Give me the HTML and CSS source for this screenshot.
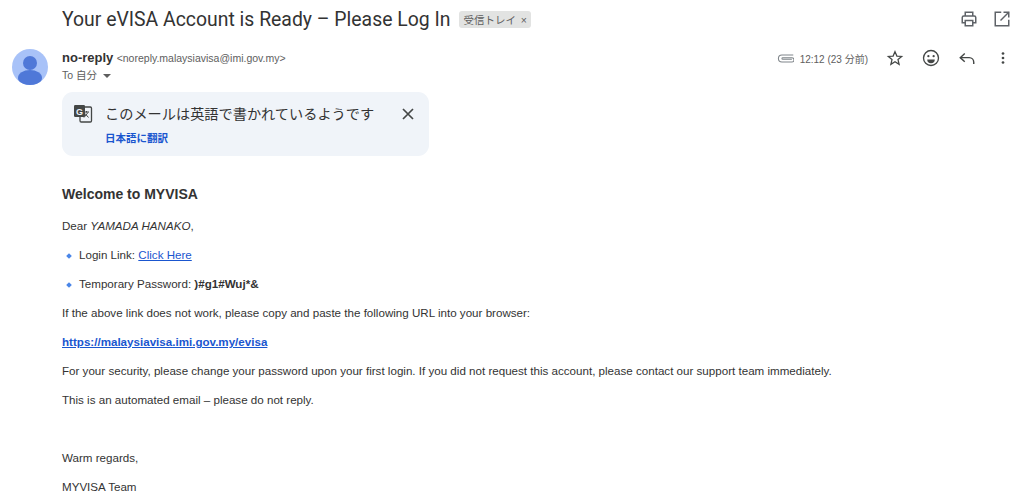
FILE: index.html
```html
<!DOCTYPE html>
<html lang="ja">
<head>
  <meta charset="UTF-8">
  <title>Your eVISA Account is Ready</title>
  <link rel="stylesheet" href="styles.css">
</head>
<body>
  <div class="asunto">
    <h1>Your eVISA Account is Ready – Please Log In</h1>
    <span class="etiqueta">受信トレイ <b>×</b></span>
    <div class="asunto-iconos">
      <svg width="18" height="18" viewBox="0 0 24 24" fill="none" stroke="#5f6368" stroke-width="2"><path d="M7 8V3h10v5"/><path d="M7 17H3v-7a2 2 0 0 1 2-2h14a2 2 0 0 1 2 2v7h-4"/><path d="M7 14h10v7H7z"/></svg>
      <svg width="18" height="18" viewBox="0 0 24 24" fill="none" stroke="#5f6368" stroke-width="2"><path d="M11 3H3v18h18v-8"/><path d="M14 3h7v7"/><path d="M21 3L10 14"/></svg>
    </div>
  </div>

  <div class="cabecera">
    <svg class="avatar" width="36" height="36" viewBox="0 0 36 36"><defs><clipPath id="circulo"><circle cx="18" cy="18" r="18"/></clipPath></defs><circle cx="18" cy="18" r="18" fill="#a8c2f8"/><g clip-path="url(#circulo)" fill="#4f78d8"><circle cx="18" cy="14" r="7"/><ellipse cx="18" cy="29" rx="12" ry="8"/></g></svg>
    <div class="remitente">
      <div><strong>no-reply</strong> <span class="correo">&lt;noreply.malaysiavisa@imi.gov.my&gt;</span></div>
      <div class="para">To 自分 <i class="flecha"></i></div>
    </div>
    <div class="acciones">
      <svg class="clip" width="17" height="17" viewBox="0 0 24 24" fill="none" stroke="#80868b" stroke-width="1.500"><path d="M23 7H7a5 5 0 0 0 0 10h14a3 3 0 0 0 0-6H8a1 1 0 0 0 0 2h13"/></svg>
      <span class="hora">12:12 (23 分前)</span>
      <svg class="estrella" width="18" height="18" viewBox="0 0 24 24" fill="none" stroke="#444746" stroke-width="1.700"><path d="M12 3.500l2.500 5.900 6.400.5-4.900 4.200 1.500 6.300-5.500-3.300-5.500 3.300 1.500-6.300-4.900-4.200 6.400-.5z"/></svg>
      <svg width="18" height="18" viewBox="0 0 24 24" fill="none" stroke="#444746" stroke-width="1.800"><circle cx="12" cy="12" r="10"/><circle cx="8.500" cy="9.500" r="1.500" fill="#444746" stroke="none"/><circle cx="15.500" cy="9.500" r="1.500" fill="#444746" stroke="none"/><path d="M7 14h10a5 5 0 0 1-10 0z" fill="#444746" stroke="none"/></svg>
      <svg width="18" height="18" viewBox="0 0 24 24" fill="none" stroke="#444746" stroke-width="1.900"><path d="M9 6l-6 5.500 6 5.500"/><path d="M3 11.500h12a6 6 0 0 1 6 6v2.500"/></svg>
      <svg width="18" height="18" viewBox="0 0 24 24" fill="#444746"><circle cx="12" cy="6" r="1.800"/><circle cx="12" cy="12" r="1.800"/><circle cx="12" cy="18" r="1.800"/></svg>
    </div>
  </div>

  <div class="traduccion">
    <svg class="traduccion-icono" width="20" height="20" viewBox="0 0 20 20"><rect x="7" y="4" width="11.500" height="15" rx="1.200" fill="#f0f4f9" stroke="#444746" stroke-width="1.300"/><rect x="1" y="2" width="11" height="12" rx="1.200" fill="#444746"/><text class="letra-g" x="3" y="11.500">G</text><path d="M11 9h5M13.500 8v1.500M15 9.500l-4 5M12 10.500l3.500 4" fill="none" stroke="#444746" stroke-width="1"/></svg>
    <div class="traduccion-texto">
      <p class="aviso">このメールは英語で書かれているようです</p>
      <a class="traducir">日本語に翻訳</a>
    </div>
    <svg class="cerrar" width="14" height="14" viewBox="0 0 14 14" stroke="#444746" stroke-width="1.700"><path d="M2 2l10 10M12 2L2 12"/></svg>
  </div>

  <div class="mensaje">
    <h2>Welcome to MYVISA</h2>
    <p>Dear <em>YAMADA HANAKO</em>,</p>
    <ul>
      <li>Login Link: <a href="#">Click Here</a></li>
      <li>Temporary Password: <strong>)#g1#Wuj*&amp;</strong></li>
    </ul>
    <p>If the above link does not work, please copy and paste the following URL into your browser:</p>
    <p><a href="#"><strong>https://malaysiavisa.imi.gov.my/evisa</strong></a></p>
    <p>For your security, please change your password upon your first login. If you did not request this account, please contact our support team immediately.</p>
    <p>This is an automated email – please do not reply.</p>
    <p class="despedida">Warm regards,</p>
    <p>MYVISA Team</p>
  </div>
</body>
</html>
```

FILE: styles.css
```css
* {
  box-sizing: border-box;
}
body {
  margin: 0;
  height: 504px;
  overflow: hidden;
  background: white;
  color: #333;
  font-family: "Liberation Sans", "Noto Sans CJK JP", sans-serif;
  font-size: 12px;
}
.asunto {
  display: flex;
  align-items: center;
  height: 38px;
  padding: 0 13px 0 62px;
}
h1 {
  margin: 0;
  font-family: Roboto, "Noto Sans CJK JP", sans-serif;
  font-size: 19.400px;
  font-weight: 400;
  color: #333;
}
.etiqueta {
  margin-left: 9px;
  padding: 1px 4px;
  background: #e2e3e2;
  border-radius: 3px;
  font-size: 10.500px;
  color: #5e5e5e;
}
.etiqueta b {
  margin-left: 2px;
  font-weight: 400;
}
.asunto-iconos {
  display: flex;
  gap: 15px;
  margin-left: auto;
}
.cabecera {
  display: flex;
  align-items: flex-start;
  height: 54px;
  padding: 11px 12px 0 12px;
}
.avatar {
  flex: none;
}
.remitente {
  margin-left: 14px;
  padding-top: 1px;
}
.remitente strong {
  font-size: 13px;
  color: #333;
}
.correo {
  font-size: 10.500px;
  color: #5e5e5e;
}
.para {
  margin-top: 2px;
  font-size: 10.500px;
  color: #5e5e5e;
}
.flecha {
  display: inline-block;
  margin-left: 3px;
  vertical-align: middle;
  border-top: 4px solid #5e5e5e;
  border-left: 4px solid transparent;
  border-right: 4px solid transparent;
}
.acciones {
  display: flex;
  align-items: center;
  gap: 18px;
  margin-left: auto;
}
.clip {
  margin-right: -12px;
}
.hora {
  font-size: 10px;
  color: #5e5e5e;
}
.traduccion {
  display: flex;
  align-items: flex-start;
  width: 367px;
  height: 64px;
  margin-left: 62px;
  padding: 11px 14px 0 11px;
  background: #f0f4f9;
  border-radius: 11px;
}
.traduccion-icono {
  flex: none;
}
.letra-g {
  font-size: 9px;
  font-weight: 700;
  fill: #f0f4f9;
}
.traduccion-texto {
  margin-left: 12px;
}
.aviso {
  margin: 0;
  font-size: 14.200px;
  color: #333;
}
.traducir {
  display: block;
  margin-top: 7px;
  font-size: 10.500px;
  font-weight: 700;
  color: #1a56cf;
}
.cerrar {
  margin: 4px 0 0 auto;
}
.mensaje {
  padding: 30px 0 0 62px;
  font-size: 11.600px;
  line-height: 14px;
}
h2 {
  margin: 0 0 17px;
  font-size: 14px;
  line-height: 16px;
  color: #333;
}
.mensaje p {
  margin: 0 0 15px;
}
ul {
  margin: 0 0 15px;
  padding: 0;
  list-style: none;
}
li {
  position: relative;
  margin-bottom: 15px;
  padding-left: 17px;
}
li:last-child {
  margin-bottom: 0;
}
li::before {
  content: "";
  position: absolute;
  left: 5px;
  top: 6px;
  width: 4px;
  height: 4px;
  background: #4a86e8;
  transform: rotate(45deg);
}
.mensaje a {
  color: #1a56cf;
  text-decoration: underline;
}
.mensaje .despedida {
  margin-top: 44px;
}
```
